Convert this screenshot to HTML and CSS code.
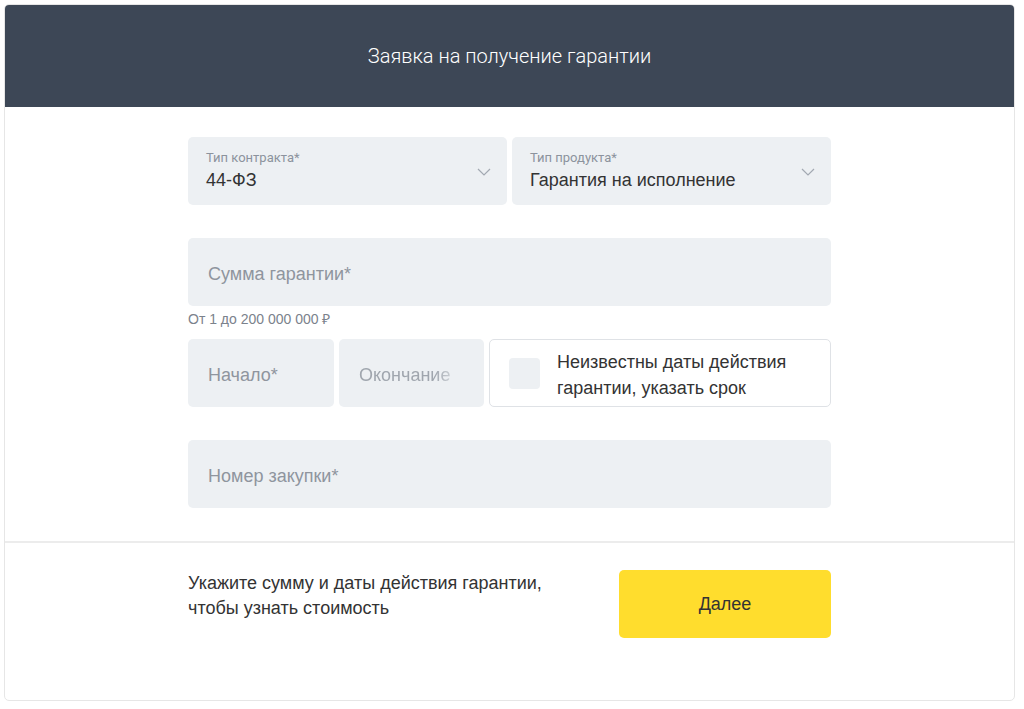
FILE: index.html
```html
<!DOCTYPE html>
<html lang="ru">
<head>
  <meta charset="UTF-8">
  <meta name="viewport" content="width=device-width, initial-scale=1.0">
  <title>Заявка на получение гарантии</title>
  <link rel="stylesheet" href="styles.css">
</head>
<body>
  <div class="card">
    <div class="card-header">
      <h1>Заявка на получение гарантии</h1>
    </div>

    <form class="form" id="guaranteeForm">
      <div class="row">
        <div class="field select">
          <span class="field-label">Тип контракта*</span>
          <span class="field-value">44-ФЗ</span>
          <svg class="chevron" width="14" height="8" viewBox="0 0 14 8"><path d="M1 1l6 6 6-6" fill="none" stroke="#a3a9b2" stroke-width="1.2"/></svg>
        </div>
        <div class="field select">
          <span class="field-label">Тип продукта*</span>
          <span class="field-value">Гарантия на исполнение</span>
          <svg class="chevron" width="14" height="8" viewBox="0 0 14 8"><path d="M1 1l6 6 6-6" fill="none" stroke="#a3a9b2" stroke-width="1.2"/></svg>
        </div>
      </div>

      <div class="group">
        <div class="field input">
          <span class="placeholder">Сумма гарантии*</span>
        </div>
        <div class="hint">От 1 до 200 000 000 ₽</div>
      </div>

      <div class="row dates">
        <div class="field input date">
          <span class="placeholder">Начало*</span>
        </div>
        <div class="field input date">
          <span class="placeholder fade">Окончание</span>
        </div>
        <label class="check-box">
          <span class="checkbox"></span>
          <span class="check-text">Неизвестны даты действия гарантии, указать срок</span>
        </label>
      </div>

      <div class="field input">
        <span class="placeholder">Номер закупки*</span>
      </div>
    </form>

    <div class="card-footer">
      <div class="footer-inner">
        <p class="footer-text">Укажите сумму и даты действия гарантии,<br>чтобы узнать стоимость</p>
        <button type="submit" form="guaranteeForm" class="next-btn">Далее</button>
      </div>
    </div>
  </div>
</body>
</html>
```

FILE: styles.css
```css
/* General styles */
body {
  font-family: "Liberation Sans", Arial, sans-serif;
  background: #ffffff;
  color: #333333;
  margin: 0;
  padding: 4px 9px 8px 4px;
}

.card {
  border: 1px solid #e6e6e6;
  border-radius: 5px;
  background: #ffffff;
  overflow: hidden;
}

.card-header {
  background: #3d4756;
  height: 102px;
  display: flex;
  align-items: center;
  justify-content: center;
}

h1 {
  margin: 0;
  color: #ffffff;
  font-family: Roboto, Arial, sans-serif;
  font-size: 20px;
  font-weight: 300;
}

.form {
  width: 643px;
  margin: 0 auto;
  padding: 30px 0 33px;
  display: flex;
  flex-direction: column;
  gap: 33px;
}

.row {
  display: flex;
  gap: 5px;
}

.field {
  position: relative;
  flex-shrink: 0;
  height: 68px;
  background: #edf0f3;
  border-radius: 5px;
  padding: 0 18px;
  box-sizing: border-box;
  display: flex;
  flex-direction: column;
  justify-content: center;
}

.row .field {
  flex: 1 1 0;
}

.field.input {
  padding: 4px 20px 0;
}

.field-label {
  font-family: Roboto, Arial, sans-serif;
  font-size: 13px;
  color: #8c939d;
  line-height: 16px;
}

.field-value {
  font-size: 18px;
  color: #333333;
  line-height: 24px;
  margin-top: 2px;
}

.chevron {
  position: absolute;
  right: 16px;
  top: 31px;
}

.placeholder {
  font-size: 18px;
  color: #8f959e;
}

.placeholder.fade {
  color: #a0a6ae;
  -webkit-mask-image: linear-gradient(to right, #000 72%, transparent 100%);
  mask-image: linear-gradient(to right, #000 72%, transparent 100%);
  white-space: nowrap;
  overflow: hidden;
}

.group {
  margin-bottom: -20px;
}

.group .hint {
  font-size: 14px;
  color: #7b828c;
  margin-top: 6px;
  line-height: 14px;
}

.dates .date:first-child {
  flex: 0 0 146px;
}

.dates .date:nth-child(2) {
  flex: 0 0 145px;
  overflow: hidden;
}

.check-box {
  flex: 1;
  height: 68px;
  box-sizing: border-box;
  border: 1px solid #dfe2e6;
  border-radius: 5px;
  display: flex;
  align-items: center;
  padding: 0 18px 0 19px;
  gap: 17px;
}

.checkbox {
  flex: 0 0 31px;
  height: 31px;
  background: #edf0f3;
  border-radius: 4px;
}

.check-text {
  font-size: 18px;
  line-height: 26px;
  color: #333333;
  padding-top: 3px;
}

.card-footer {
  border-top: 2px solid #ececec;
  padding: 27px 0 62px;
}

.footer-inner {
  width: 643px;
  margin: 0 auto;
  display: flex;
  justify-content: space-between;
  align-items: flex-start;
}

.footer-text {
  margin: 0;
  padding-top: 1px;
  font-size: 18px;
  line-height: 25px;
  color: #333333;
}

.next-btn {
  width: 212px;
  height: 68px;
  background: #ffdd2d;
  border: none;
  border-radius: 5px;
  font-family: inherit;
  font-size: 18px;
  color: #333333;
  cursor: pointer;
}

.next-btn:hover {
  background: #fcc521;
}
```
